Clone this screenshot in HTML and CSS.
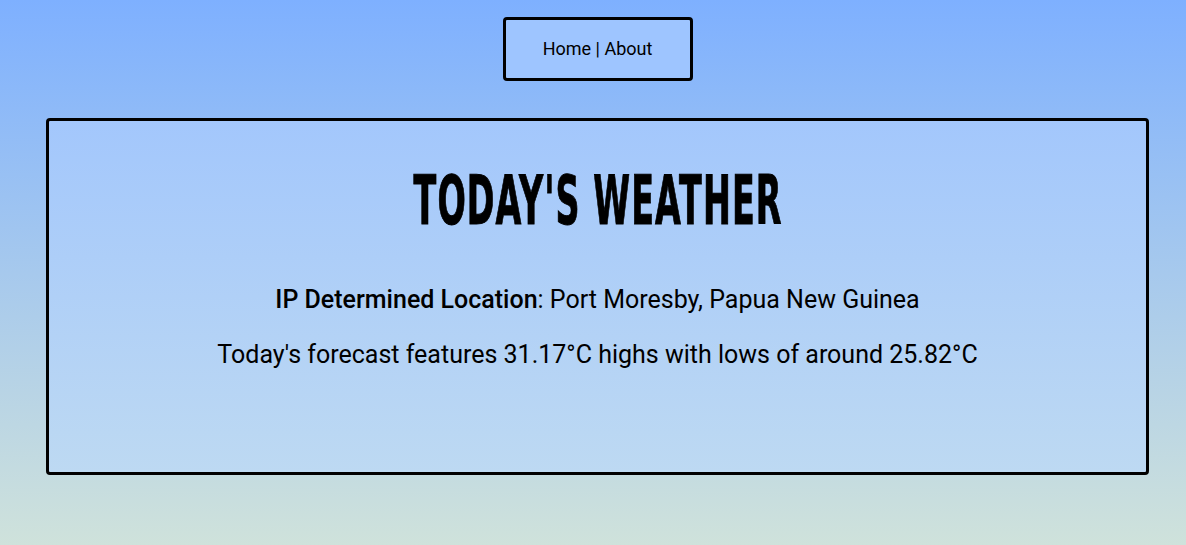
FILE: index.html
```html
<!DOCTYPE html>
<html lang="en">
<head>
<meta charset="utf-8">
<title>Today's Weather</title>
<link rel="stylesheet" href="styles.css">
</head>
<body>
<div class="page">
  <nav class="nav"><a href="#">Home</a> | <a href="#">About</a></nav>
  <main class="card">
    <h1 class="title">Today's Weather</h1>
    <p class="line"><strong>IP Determined Location</strong>: Port Moresby, Papua New Guinea</p>
    <p class="line">Today's forecast features 31.17°C highs with lows of around 25.82°C</p>
  </main>
</div>
</body>
</html>
```
FILE: styles.css
```css
html, body {
  margin: 0;
  height: 100%;
}
body {
  background: linear-gradient(to bottom, #7eb0ff 0%, #cfe2db 100%);
  font-family: Roboto, "Liberation Sans", sans-serif;
  color: #000;
}
.page {
  display: flex;
  flex-direction: column;
  align-items: center;
  padding: 17px 37px 0 46px;
}
.nav {
  box-sizing: border-box;
  width: 190px;
  height: 64px;
  border: 3px solid #000;
  border-radius: 4px;
  background: #9ec5ff;
  display: flex;
  align-items: center;
  justify-content: center;
  font-size: 18px;
  line-height: 20px;
  white-space: pre;
}
.nav a {
  color: #000;
  text-decoration: none;
}
.card {
  box-sizing: border-box;
  width: 100%;
  height: 357px;
  margin-top: 37px;
  border: 3px solid #000;
  border-radius: 4px;
  background: linear-gradient(to bottom, #a3c7fc 0%, #bdd9f2 100%);
  text-align: center;
  padding-top: 40px;
}
.title {
  margin: 0;
  font-family: "DejaVu Sans Condensed", "DejaVu Sans", sans-serif;
  font-weight: bold;
  font-size: 68px;
  line-height: 80px;
  text-transform: uppercase;
  letter-spacing: 2px;
  text-indent: 2px;
  transform: scaleX(0.545);
  -webkit-text-stroke: 1px #000;
}
.line {
  margin: 44px 0 0;
  font-size: 25px;
  line-height: 29px;
}
.line strong {
  font-weight: 500;
}
.line + .line {
  margin-top: 26px;
}
```
